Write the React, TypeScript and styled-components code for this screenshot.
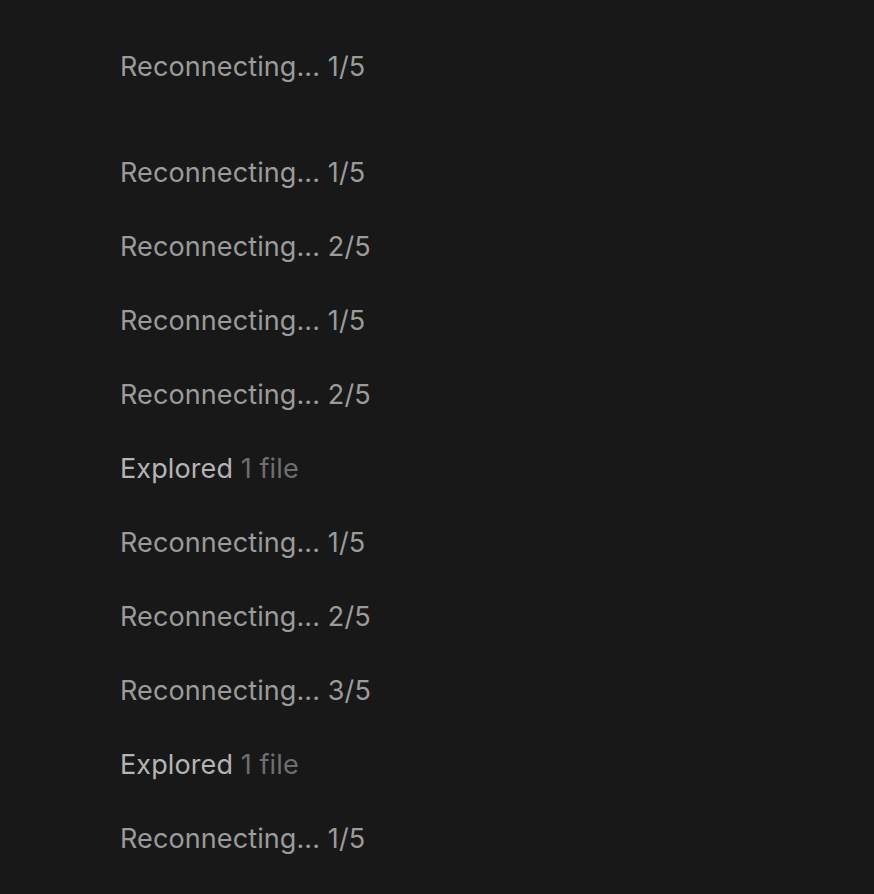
import React from "react";
import styled, { createGlobalStyle } from "styled-components";

const Global = createGlobalStyle`
  html, body { margin: 0; padding: 0; background: #181818; }
  body { font-family: Inter, "Noto Sans", sans-serif; -webkit-font-smoothing: antialiased; }
`;

const Page = styled.div`
  width: 874px;
  height: 894px;
  background: #181818;
  box-sizing: border-box;
  padding: 30px 0 0 120px;
  display: flex;
  flex-direction: column;
`;

const Row = styled.div<{ $gapBefore?: number }>`
  height: 74px;
  line-height: 74px;
  font-size: 27px;
  letter-spacing: 0.1px;
  color: #9b9b9b;
  margin-top: ${(p) => p.$gapBefore ?? 0}px;
  white-space: nowrap;
`;

const Strong = styled.span`
  color: #b4b4b4;
`;

const Dim = styled.span`
  color: #6f6f6f;
`;

type Item = { kind: "rec"; n: number } | { kind: "exp" };

const items: Item[] = [
  { kind: "rec", n: 1 },
  { kind: "rec", n: 2 },
  { kind: "rec", n: 1 },
  { kind: "rec", n: 2 },
  { kind: "exp" },
  { kind: "rec", n: 1 },
  { kind: "rec", n: 2 },
  { kind: "rec", n: 3 },
  { kind: "exp" },
  { kind: "rec", n: 1 },
];

export default function App() {
  return (
    <>
      <Global />
      <Page>
        <Row>Reconnecting... 1/5</Row>
        {items.map((it, i) => (
          <Row key={i} $gapBefore={i === 0 ? 32 : 0}>
            {it.kind === "rec" ? (
              `Reconnecting... ${it.n}/5`
            ) : (
              <>
                <Strong>Explored</Strong> <Dim>1 file</Dim>
              </>
            )}
          </Row>
        ))}
      </Page>
    </>
  );
}
